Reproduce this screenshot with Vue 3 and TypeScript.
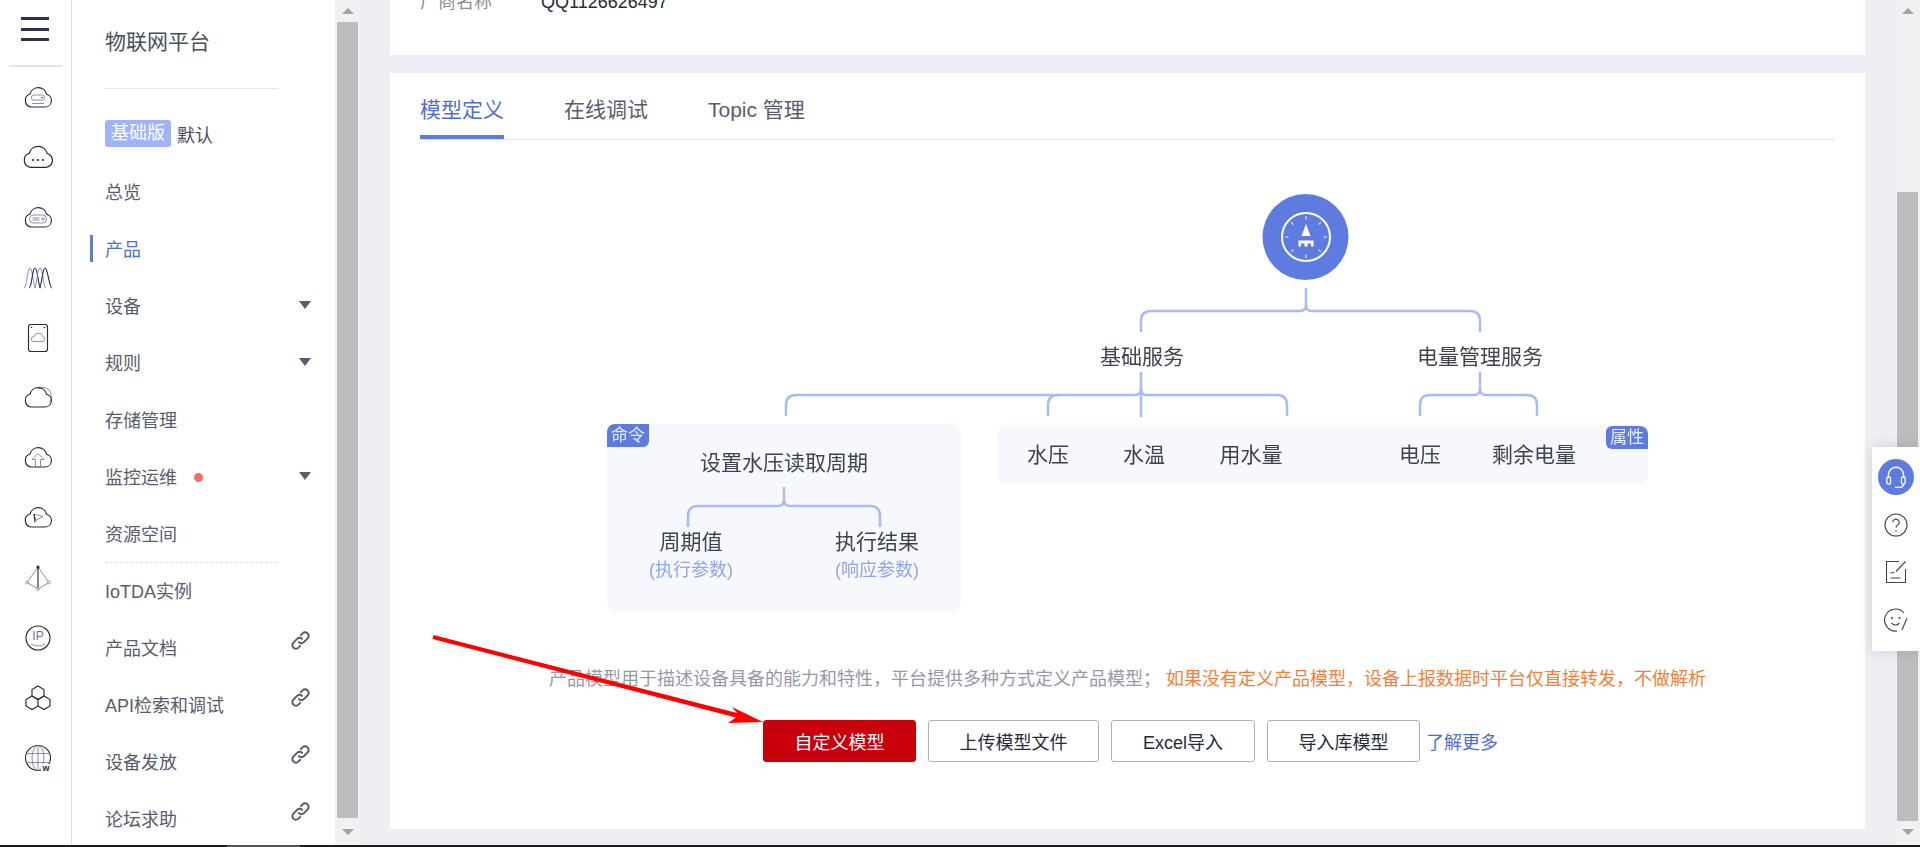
<script setup lang="ts">
interface NavItem {
  label: string
  active?: boolean
  caret?: boolean
  dot?: boolean
  link?: boolean
}
const upper: NavItem[] = [
  { label: '总览' },
  { label: '产品', active: true },
  { label: '设备', caret: true },
  { label: '规则', caret: true },
  { label: '存储管理' },
  { label: '监控运维', caret: true, dot: true },
  { label: '资源空间' }
]
const lower: NavItem[] = [
  { label: 'IoTDA实例' },
  { label: '产品文档', link: true },
  { label: 'API检索和调试', link: true },
  { label: '设备发放', link: true },
  { label: '论坛求助', link: true }
]
const tabs = ['模型定义', '在线调试', 'Topic 管理']
const cloud = 'M8 24h14a6.5 6.5 0 0 0 1.5-12.8A8.5 8.5 0 0 0 7 11a6.7 6.7 0 0 0 1 13z'
const ticks = Array.from({ length: 8 }, (_, i) => i * 45)
const connectors = [
  'M1306 288V305Q1306 311 1300 311H1151Q1141 311 1141 321V332',
  'M1306 305Q1306 311 1312 311H1470Q1480 311 1480 321V332',
  'M1141 372V389Q1141 395 1135 395H796Q786 395 786 405V416',
  'M1058 395Q1048 395 1048 405V416',
  'M1141 389V417',
  'M1141 389Q1141 395 1147 395H1277Q1287 395 1287 405V416',
  'M1480 372V389Q1480 395 1474 395H1430Q1420 395 1420 405V416',
  'M1480 389Q1480 395 1486 395H1527Q1537 395 1537 405V416',
  'M784 487V500Q784 506 778 506H698Q688 506 688 516V527',
  'M784 500Q784 506 790 506H870Q880 506 880 516V527'
]
const props = [
  { t: '水压', x: 1048 },
  { t: '水温', x: 1144 },
  { t: '用水量', x: 1251 },
  { t: '电压', x: 1420 },
  { t: '剩余电量', x: 1534 }
]
</script>

<template>
  <div class="app">
    <div class="body">
      <aside class="rail">
        <div class="burger"><i></i><i></i><i></i></div>
        <div class="rail-line"></div>
        <div class="rail-list">
          <svg class="ri" viewBox="0 0 30 30"><path :d="cloud" /><rect class="thin" x="8.5" y="12" width="13" height="5" rx="2" /><path class="thin" d="M9 20.5h12" /><circle class="solid" cx="19" cy="14.5" r=".8" /></svg>
          <svg class="ri" viewBox="0 0 30 30"><path :d="cloud" transform="translate(-1.2 -1.6) scale(1.08)" /><g class="dots"><circle cx="10" cy="17" r="1.1" /><circle cx="15" cy="17" r="1.1" /><circle cx="20" cy="17" r="1.1" /></g></svg>
          <svg class="ri" viewBox="0 0 30 30"><path :d="cloud" /><rect class="thin" x="6.5" y="12" width="17" height="8" rx="4" /><path class="thin" d="M9.5 15h7M9.5 17h7" /><circle class="thin" cx="20" cy="16" r="1.2" /></svg>
          <svg class="ri" viewBox="0 0 30 30"><path class="thin2" d="M1 25C4 25 4 5 7 5s3 20 6 20" /><path d="M6 25C9 25 9 5 12 5s3 20 6 20" /><path class="thin2" d="M11 25C14 25 14 5 17 5s3 20 6 20" /><path d="M16 25C19 25 19 5 22 5s4 20 7 20" /></svg>
          <svg class="ri" viewBox="0 0 30 30"><rect x="5.5" y="1.5" width="19" height="27" rx="2.5" /><path class="thin" d="M10.5 18.5h9a2.4 2.4 0 0 0 .4-4.7 4.6 4.6 0 0 0-9-.1 2.4 2.4 0 0 0-.4 4.8z" /><g class="dots"><circle cx="8.5" cy="4.5" r=".8" /><circle cx="21.5" cy="4.5" r=".8" /></g></svg>
          <svg class="ri" viewBox="0 0 30 30"><path class="thin" d="M15 6a8 8 0 0 1 13 6c1 3 0 6-2 7" /><path :d="cloud" /></svg>
          <svg class="ri" viewBox="0 0 30 30"><path :d="cloud" /><path class="thin" d="M15 10.5l-6 6h3.5V24h5v-7.500H21z" /></svg>
          <svg class="ri" viewBox="0 0 30 30"><path :d="cloud" /><path class="thin" d="M11 11l9 2.500-7 4z" /><path d="M11 11l1 8.500" /></svg>
          <svg class="ri" viewBox="0 0 30 30"><path class="thin" d="M15 4L4 19.500 15 26l11-6.500z" /><path d="M15 4v22" /><circle class="solid" cx="15" cy="4" r="1.600" /><circle class="white" cx="4" cy="19.500" r="1.400" /><circle class="white" cx="26" cy="19.500" r="1.400" /><circle class="white" cx="15" cy="26" r="1.400" /></svg>
          <svg class="ri" viewBox="0 0 30 30"><circle cx="15" cy="15" r="12" /><text class="ip" x="15" y="16.500">IP</text><path class="thin" d="M8 21q7 4 14 0" /></svg>
          <svg class="ri" viewBox="0 0 30 30"><path d="M15 3l6 3.500v6.500l-6 3.500-6-3.500V6.500z" /><path d="M9 13l6 3.500v6.500l-6 3.500-6-3.500v-6.500zM21 13l6 3.500v6.500l-6 3.500-6-3.500v-6.500z" /></svg>
          <svg class="ri" viewBox="0 0 30 30"><circle cx="15" cy="15" r="12.500" /><ellipse class="thin" cx="15" cy="15" rx="6" ry="12.500" /><path class="thin" d="M15 2.500v25M3 10.500h24M3 19.500h24" /><rect class="white-box" x="18" y="21" width="10" height="8" /><text class="w" x="23" y="28">w</text></svg>
        </div>
      </aside>

      <nav class="nav">
        <div class="nav-head"><span class="nav-title">物联网平台</span></div>
        <div class="nav-item version"><span class="badge">基础版</span><span class="version-name">默认</span></div>
        <div v-for="item in upper" :key="item.label" class="nav-item" :class="{ active: item.active }">
          <span>{{ item.label }}</span>
          <i v-if="item.dot" class="dot"></i>
          <i v-if="item.caret" class="caret"></i>
        </div>
        <div class="sep"></div>
        <div v-for="item in lower" :key="item.label" class="nav-item">
          <span>{{ item.label }}</span>
          <svg v-if="item.link" class="chain" viewBox="0 0 18 18"><path d="M7.600 10.400a3 3 0 0 0 4.300 0l3.200-3.200a3 3 0 0 0-4.300-4.300L9.300 4.400" /><path d="M10.400 7.600a3 3 0 0 0-4.300 0l-3.200 3.200a3 3 0 0 0 4.300 4.300l1.500-1.500" /></svg>
        </div>
      </nav>

      <div class="scroll nav-scroll">
        <div class="arrow up"><i></i></div>
        <div class="thumb"></div>
        <div class="arrow down tall"><i></i></div>
      </div>

      <main class="main">
        <section class="card top-card">
          <div class="meta"><span class="meta-key">厂商名称</span><span class="meta-val">QQ1126626497</span></div>
        </section>
        <section class="card model-card">
          <div class="tabs">
            <div v-for="(t, i) in tabs" :key="t" class="tab" :class="{ on: i === 0 }">{{ t }}</div>
          </div>
          <svg class="diagram" viewBox="390 140 1475 527" width="1475" height="527">
            <rect class="panel" x="607" y="424" width="354" height="189" rx="11" />
            <rect class="panel" x="997" y="425" width="651" height="60" rx="11" />
            <path v-for="d in connectors" :key="d" class="conn" :d="d" />
            <circle class="hub" cx="1305.500" cy="237" r="43" />
            <circle class="ring" cx="1306" cy="237" r="24" />
            <path v-for="a in ticks" :key="a" class="tick" d="M1306 216v3.500" :transform="`rotate(${a} 1306 237)`" />
            <path class="brush" d="M1306 224l4.500 12h-9z" />
            <path class="brush" d="M1298.500 240.500h15v6h-2.500v-3h-3.500v3h-3v-3h-3.500v3h-2.500z" />
            <path class="tag" d="M615 424h34v17a6 6 0 0 1-6 6h-36v-15a8 8 0 0 1 8-8z" />
            <text class="tag-t" x="628" y="441">命令</text>
            <path class="tag" d="M1612 426h28a8 8 0 0 1 8 8v15h-36a6 6 0 0 1-6-6v-11a6 6 0 0 1 6-6z" />
            <text class="tag-t" x="1627" y="443">属性</text>
            <text class="lbl" x="1142" y="364">基础服务</text>
            <text class="lbl" x="1480" y="364">电量管理服务</text>
            <text class="lbl" x="784" y="470">设置水压读取周期</text>
            <text class="lbl" x="691" y="549">周期值</text>
            <text class="lbl" x="877" y="549">执行结果</text>
            <text class="sub" x="691" y="576">(执行参数)</text>
            <text class="sub" x="877" y="576">(响应参数)</text>
            <text v-for="p in props" :key="p.t" class="lbl" :x="p.x" y="462">{{ p.t }}</text>
          </svg>
          <p class="desc">产品模型用于描述设备具备的能力和特性，平台提供多种方式定义产品模型；<em>如果没有定义产品模型，设备上报数据时平台仅直接转发，不做解析</em></p>
          <div class="actions">
            <button class="btn primary">自定义模型</button>
            <button class="btn w171">上传模型文件</button>
            <button class="btn w144">Excel导入</button>
            <button class="btn w153">导入库模型</button>
            <a class="more">了解更多</a>
          </div>
        </section>
      </main>

      <div class="scroll main-scroll">
        <div class="arrow up"><i></i></div>
        <div class="spacer"></div>
        <div class="thumb"></div>
        <div class="arrow down"><i></i></div>
      </div>
    </div>
    <div class="strip"><i></i></div>

    <div class="float">
      <div class="f-head">
        <svg viewBox="0 0 24 24"><path d="M5 13V10a7 7 0 0 1 14 0v3" /><rect x="3.500" y="12" width="3.500" height="6.500" rx="1.500" /><rect x="17" y="12" width="3.500" height="6.500" rx="1.500" /><path d="M19 18.500q0 3-4 3h-4" /></svg>
      </div>
      <svg class="f-ico" viewBox="0 0 24 24"><circle cx="12" cy="12" r="11" /><path d="M8.800 9.300a3.200 3.200 0 1 1 5 2.700c-1.100.7-1.800 1.300-1.800 2.600" /><circle class="fd" cx="12" cy="18" r=".8" /></svg>
      <svg class="f-ico" viewBox="0 0 24 24"><path d="M15 1.500H2.500v21h19V9" /><path d="M6.500 13l4-.8M6.500 18h10" /><path d="M12 11.500L21.500 1.500" /></svg>
      <svg class="f-ico" viewBox="0 0 24 24"><path d="M20 5A11 11 0 1 0 13 23" /><circle class="fd" cx="8" cy="10" r="1" /><circle class="fd" cx="15.500" cy="10" r="1" /><path d="M7.500 15q4 4 8 0" /><path d="M23 10l-5 12" /></svg>
    </div>

    <svg class="red-arrow" viewBox="0 0 1920 847" width="1920" height="847">
      <path d="M433.500 635L737 713 732 707 763 722 728 723 736 717.500 432.500 639z" fill="#ff0000" />
    </svg>
  </div>
</template>

<style scoped>
.app {
  width: 1920px;
  height: 847px;
  display: flex;
  flex-direction: column;
  position: relative;
  overflow: hidden;
  font-family: "Liberation Sans", "Noto Sans CJK SC", sans-serif;
  color: #575d6c;
  background: #fff;
}
.body { flex: 1; display: flex; min-height: 0; }
.strip { height: 2px; background: #1c1c1c; display: flex; padding-left: 227px; }
.strip i { width: 73px; background: #555; }

.rail { width: 72px; box-sizing: border-box; border-right: 1px solid #e0e1e5; display: flex; flex-direction: column; align-items: center; flex: none; }
.burger { width: 28px; margin: 17px 2px 0 0; display: flex; flex-direction: column; gap: 7.500px; }
.burger i { height: 3px; background: #2b3349; }
.rail-line { width: 53px; height: 2px; background: #e3e3e8; margin: 24px 1px 0 0; }
.rail-list { display: flex; flex-direction: column; gap: 30px; margin-top: 16px; margin-left: 4px; }
.ri { width: 30px; height: 30px; display: block; fill: none; stroke: #252b3a; stroke-width: 1.150; }
.ri .thin { stroke: #6c7493; stroke-width: .8; }
.ri .thin2 { stroke: #6c84d8; stroke-width: .9; }
.ri .dots circle, .ri .solid { fill: #252b3a; stroke: none; }
.ri .white { fill: #fff; stroke: #6c7493; stroke-width: .7; }
.ri .white-box { fill: #fff; stroke: none; }
.ri .ip { font-size: 12px; fill: #6c7493; stroke: none; text-anchor: middle; }
.ri .w { font-size: 9px; font-weight: 700; fill: #252b3a; stroke: none; text-anchor: middle; }

.nav { width: 263px; flex: none; padding-left: 33px; box-sizing: border-box; background: #fff; }
.nav-head { width: 173px; height: 61px; border-bottom: 1px solid #e3e3e8; margin-bottom: 16px; padding-top: 27px; }
.nav-title { font-size: 21px; line-height: 30px; color: #4a4f5c; display: block; }
.nav-item { height: 57px; display: flex; align-items: center; font-size: 18px; position: relative; width: 206px; }
.nav-item.active { color: #526ecc; }
.nav-item.active::before { content: ""; position: absolute; left: -15px; top: 16px; width: 3px; height: 27px; background: #5e7ce0; }
.version { color: #4a4f5c; }
.badge { background: #9fb4f8; color: #fff; border-radius: 3px; width: 66px; height: 27px; line-height: 27px; text-align: center; margin-right: 6px; }
.caret { position: absolute; right: 0; top: 25px; border: 6px solid transparent; border-top: 8px solid #575d6c; border-bottom: 0; }
.dot { width: 9px; height: 9px; border-radius: 50%; background: #f66f6a; margin-left: 17px; margin-top: 3px; }
.sep { width: 173px; border-top: 1px dashed #dfe1e6; margin: 1px 0 -2px; }
.chain { position: absolute; right: 0; top: 12px; width: 21px; height: 21px; fill: none; stroke: #575d6c; stroke-width: 1.700; stroke-linecap: round; }

.scroll { width: 25px; flex: none; background: #f1f1f1; display: flex; flex-direction: column; align-items: center; }
.arrow { height: 22px; width: 100%; flex: none; display: flex; justify-content: center; align-items: center; }
.arrow i { border: 6px solid transparent; border-bottom: 0; border-top: 6px solid #a3a3a3; }
.arrow.up i { border-top: 0; border-bottom: 6px solid #a3a3a3; }
.arrow.down { height: 24px; align-items: flex-start; padding-top: 8px; box-sizing: border-box; }
.arrow.down.tall { height: 27px; padding-top: 11px; }
.thumb { width: 21px; flex: 1; background: #bdbdbd; }
.spacer { height: 170px; flex: none; }

.main { flex: 1; background: #eeeff4; padding: 0 30px 16px; display: flex; flex-direction: column; gap: 18px; min-width: 0; }
.card { background: #fff; }
.top-card { height: 55px; overflow: hidden; flex: none; }
.meta { display: flex; margin: -10px 0 0 30px; font-size: 18px; line-height: 24px; }
.meta-key { width: 121px; color: #8a8e99; }
.meta-val { color: #252b3a; }
.model-card { flex: 1; display: flex; flex-direction: column; padding: 0 30px; }
.tabs { display: flex; gap: 60px; border-bottom: 1px solid #dfe1e6; flex: none; }
.tab { height: 66px; box-sizing: border-box; padding-top: 14px; line-height: 46px; font-size: 21px; border-bottom: 4px solid transparent; }
.tab.on { color: #526ecc; border-bottom-color: #5e7ce0; }
.diagram { display: block; margin: 0 -30px; flex: none; filter: blur(.4px); }
.panel { fill: #f6f8fd; }
.conn { fill: none; stroke: #a9bbf2; stroke-width: 2.500; stroke-linecap: butt; }
.hub { fill: #5e7ce0; }
.ring { fill: none; stroke: #fff; stroke-width: 2; }
.tick { stroke: #c6d1f5; stroke-width: 1.400; fill: none; }
.brush { fill: #fff; }
.tag { fill: #5e7ce0; }
.tag-t { fill: #e9eefc; font-size: 17px; text-anchor: middle; }
.lbl { fill: #3f434c; font-size: 21px; text-anchor: middle; }
.sub { fill: #8ea6ee; font-size: 18px; text-anchor: middle; }
.desc { margin: 0; font-size: 18px; line-height: 24px; text-align: center; color: #9599a5; flex: none; }
.desc em { font-style: normal; color: #f0813a; margin-left: 5px; }
.actions { display: flex; margin: 29px 0 0 343px; align-items: center; flex: none; }
.btn { height: 42px; box-sizing: border-box; border: 1px solid #adb0b8; border-radius: 3px; background: #fff; color: #252b3a; font: inherit; font-size: 18px; padding: 0; margin-right: 12px; }
.primary { width: 153px; background: #c7000b; border-color: #c7000b; color: #fff; }
.w171 { width: 171px; }
.w144 { width: 144px; }
.w153 { width: 153px; margin-right: 6px; }
.more { color: #526ecc; font-size: 18px; }

.float { position: absolute; right: 0; top: 447px; width: 48px; height: 204px; background: #fff; box-shadow: 0 0 14px rgba(60, 65, 90, .18); display: flex; flex-direction: column; align-items: center; padding-top: 12px; box-sizing: border-box; gap: 11.500px; }
.f-head { width: 36px; height: 36px; border-radius: 50%; background: #5e7ce0; display: flex; align-items: center; justify-content: center; }
.f-head svg { width: 26px; height: 26px; fill: none; stroke: #fff; stroke-width: 1.200; }
.f-ico { width: 36px; height: 36px; padding: 6px; box-sizing: border-box; fill: none; stroke: #3f4450; stroke-width: 1.100; }
.f-ico .fd { fill: #3f4450; stroke: none; }

.red-arrow { position: absolute; left: 0; top: 0; pointer-events: none; }
</style>

<style>
html, body { margin: 0; overflow: hidden; }
</style>
